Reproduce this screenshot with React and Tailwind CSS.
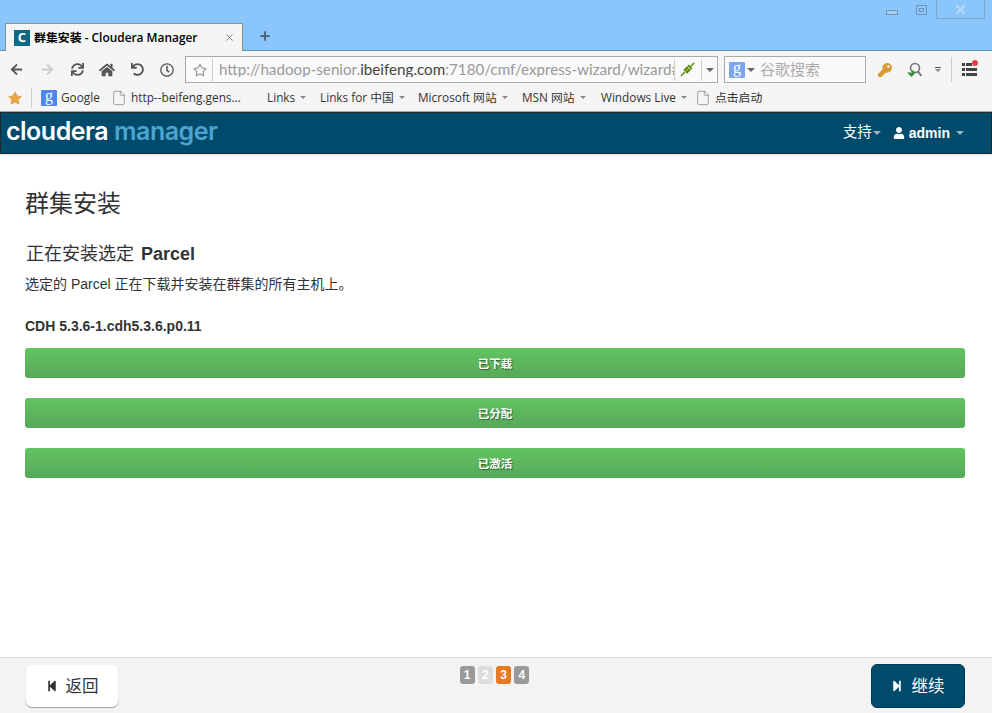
import React from "react";
import { FaArrowLeft, FaArrowRight, FaSync, FaHome, FaUndo, FaRegClock, FaStar, FaRegStar, FaKey, FaUser, FaStepBackward, FaStepForward } from "react-icons/fa";
import { File, Plus, X } from "lucide-react";

const Caret = ({ className = "border-t-[#888]" }) => (
  <span className={`block w-0 h-0 border-x-[4px] border-x-transparent border-t-[4px] ${className}`} />
);

const SmallCaret = () => (
  <span className="block w-0 h-0 border-x-[3px] border-x-transparent border-t-[3px] border-t-[#888]" />
);

// the blue "g" tile used for google bookmark and search box
const GoogleTile = ({ className }) => (
  <span className={`flex items-center justify-center w-4 h-4 rounded-[1px] text-white text-[16px] leading-none pb-[3px] font-['Liberation_Serif',serif] ${className}`}>
    g
  </span>
);

function BookmarkItem({ width, children }) {
  return <div className={`flex items-center gap-[5px] shrink-0 ${width}`}>{children}</div>;
}

const PageIcon = () => (
  <File size={16} strokeWidth={1.2} className="text-[#888] shrink-0 -ml-[2px] -mr-[1px]" />
);

function BrowserChrome() {
  return (
    <div className="font-['Open_Sans','Noto_Sans_CJK_SC',sans-serif]">
      {/* Title bar */}
      <div className="h-[51px] bg-[#8ac5fb] border-b border-[#6b90b5] flex flex-col">
        <div className="h-[23px] flex justify-end items-start pr-[7px] shrink-0">
          <div className="w-[12px] h-[5px] mt-[10px] mr-[18px] bg-[#a9cdec] border border-[#6f94b8]" />
          <div className="w-[11px] h-[10px] mt-[5px] mr-[9px] border border-[#6f94b8] flex items-center justify-center">
            <div className="w-[5px] h-[4px] border border-[#6f94b8]" />
          </div>
          <div className="w-[49px] h-[19px] border border-t-0 border-[#7aa6d0] flex items-center justify-center">
            <X size={15} strokeWidth={3} className="text-[#b9d8f2]" />
          </div>
        </div>
        <div className="flex items-end pl-[5px] h-[27px]">
          <div className="w-[238px] h-[28px] bg-[#f5f5f5] border border-b-0 border-[#8c8f92] flex items-center pl-[8px] pr-[7px] -mb-px">
            <span className="w-4 h-4 bg-[#0b6a85] text-white text-[13px] font-bold leading-none flex items-center justify-center shrink-0">C</span>
            <span className="ml-[4px] text-[11.9px] text-black font-semibold whitespace-nowrap flex-1">群集安装 - Cloudera Manager</span>
            <X size={11} strokeWidth={2} className="text-[#777]" />
          </div>
          <Plus size={14} strokeWidth={3} className="ml-[15px] mb-[7px] text-[#4a5d70]" />
        </div>
      </div>

      {/* Nav toolbar */}
      <div className="h-[33px] pt-[4px] bg-[#f5f5f5] flex items-center pl-[10px]">
        <FaArrowLeft size={13} className="text-[#555] shrink-0" />
        <FaArrowRight size={13} className="ml-[18px] text-[#ccc] shrink-0" />
        <FaSync size={13} className="ml-[17px] text-[#555] shrink-0" />
        <FaHome size={16} className="ml-[15px] text-[#555] shrink-0" />
        <FaUndo size={13} className="ml-[16px] text-[#555] shrink-0" />
        <FaRegClock size={14} className="ml-[16px] text-[#555] shrink-0" />
        <div className="ml-[11px] w-[533px] h-[27px] border border-[#aaa] bg-[#fafafa] flex items-center shrink-0">
          <FaRegStar size={14} className="ml-[7px] text-[#999] shrink-0" />
          <div className="ml-[5px] w-px h-[22px] bg-[#ccc] shrink-0" />
          <div className="ml-[6px] w-[455px] overflow-hidden whitespace-nowrap text-[15.2px] leading-none text-[#999] shrink-0 font-['Lato',sans-serif]">
            http://hadoop-senior.<span className="text-[#444]">ibeifeng.com</span>:7180/cmf/express-wizard/wizard#
          </div>
          <div className="w-px h-[22px] bg-[#ccc] shrink-0" />
          {/* connection plug icon */}
          <svg viewBox="0 0 16 16" className="ml-[5px] w-[15px] h-[15px] shrink-0" fill="none">
            <path d="M1 15 5 11M11 5l4-4" stroke="#5c8a0a" strokeWidth="1.6" />
            <path d="M3.5 8.5 7.5 4.5 11.5 8.5 7.5 12.5z" fill="#5c8a0a" />
            <path d="M8.5 3.5 12.5 7.5" stroke="#5c8a0a" strokeWidth="2" />
            <path d="M6 10 10 6" stroke="#c9dca0" strokeWidth="1" />
          </svg>
          <div className="ml-[6px] w-px h-[22px] bg-[#ccc] shrink-0" />
          <span className="ml-[4px]"><Caret className="border-t-[#666]" /></span>
        </div>
        <div className="ml-[6px] w-[142px] h-[27px] border border-[#aaa] bg-[#fafafa] flex items-center shrink-0">
          <GoogleTile className="ml-[4px] bg-[#7aa7ee]" />
          <span className="ml-[2px]"><Caret className="border-t-[#666]" /></span>
          <span className="ml-[5px] text-[15px] leading-none text-[#aaa] whitespace-nowrap">谷歌搜索</span>
        </div>
        <FaKey size={14} className="ml-[12px] text-[#dc9a35] shrink-0" />
        {/* search-with-arrow icon */}
        <svg viewBox="0 0 16 16" className="ml-[14px] w-[16px] h-[16px] shrink-0" fill="none">
          <circle cx="9" cy="6" r="4.5" stroke="#777" strokeWidth="1.6" />
          <path d="M12 9.5 15.5 14" stroke="#777" strokeWidth="2" />
          <path d="M7 8.5v3.5H3.5" stroke="#3f8f3a" strokeWidth="2" />
          <path d="M1 10.5 5.5 15l4-4.5z" fill="#3f8f3a" />
        </svg>
        <div className="ml-[13px] flex flex-col items-center gap-[1px] shrink-0">
          <span className="w-[6px] h-px bg-[#555]" />
          <SmallCaret />
        </div>
        <div className="ml-[10px] w-px h-[25px] bg-[#ccc] shrink-0" />
        <div className="ml-[10px] w-[15px] relative flex flex-col gap-[2px] shrink-0">
          <span className="h-[3px] w-[10px] flex gap-[1px]"><span className="w-[3px] bg-[#444]" /><span className="flex-1 bg-[#444]" /></span>
          <span className="h-[3px] flex gap-[1px]"><span className="w-[3px] bg-[#444]" /><span className="flex-1 bg-[#444]" /></span>
          <span className="h-[3px] flex gap-[1px]"><span className="w-[3px] bg-[#444]" /><span className="flex-1 bg-[#444]" /></span>
          <span className="absolute -right-[1px] -top-[3px] w-[6px] h-[6px] rounded-full bg-[#e5403e]" />
        </div>
      </div>

      {/* Bookmarks bar */}
      <div className="h-[28px] bg-[#f5f5f5] border-b border-[#a8a8a8] flex items-center pl-[8px] text-[11.8px] text-[#333] whitespace-nowrap">
        <FaStar size={14} className="text-[#e8a84a] shrink-0" />
        <div className="ml-[9px] w-px h-[20px] bg-[#ccc] shrink-0" />
        <div className="ml-[9px] shrink-0 flex items-center gap-[4px] w-[72px]">
          <GoogleTile className="bg-[#4f86ec]" />
          <span>Google</span>
        </div>
        <BookmarkItem width="w-[154px]">
          <PageIcon />
          <span>http--beifeng.gens...</span>
        </BookmarkItem>
        <BookmarkItem width="w-[53px]"><span>Links</span><SmallCaret /></BookmarkItem>
        <BookmarkItem width="w-[98px]"><span>Links for 中国</span><SmallCaret /></BookmarkItem>
        <BookmarkItem width="w-[104px]"><span>Microsoft 网站</span><SmallCaret /></BookmarkItem>
        <BookmarkItem width="w-[79px]"><span>MSN 网站</span><SmallCaret /></BookmarkItem>
        <BookmarkItem width="w-[96px]"><span>Windows Live</span><SmallCaret /></BookmarkItem>
        <BookmarkItem width="w-[90px]">
          <PageIcon />
          <span>点击启动</span>
        </BookmarkItem>
      </div>
    </div>
  );
}

function AppHeader() {
  return (
    <header className="h-[42px] bg-[#004a6b] border border-[#1f2a30] flex items-center justify-between pl-[5px] pr-[27px] shadow-[0_1px_2px_rgba(0,0,0,0.15)]">
      <div className="font-['Inter',sans-serif] text-[25px] font-semibold leading-none tracking-[-0.5px] -mt-[3px] whitespace-nowrap">
        <span className="text-white">cloudera</span>
        <span className="text-[#4ba5cf] ml-[6px]">manager</span>
      </div>
      <div className="flex items-center text-white font-['Liberation_Sans','Noto_Sans_CJK_SC',sans-serif]">
        <span className="text-[14.5px]">支持</span>
        <span className="ml-[1px]"><Caret className="border-t-[#9db4c2]" /></span>
        <FaUser size={12} className="ml-[12px]" />
        <span className="ml-[4px] text-[14px] font-bold mt-[1px]">admin</span>
        <span className="ml-[6px]"><Caret className="border-t-[#9db4c2]" /></span>
      </div>
    </header>
  );
}

function ProgressBar({ label }) {
  return (
    <div className="h-[30px] pt-[4px] rounded-[3px] bg-gradient-to-b from-[#62c462] to-[#57a957] flex items-center justify-center text-[11.5px] font-bold text-white [text-shadow:1px_1px_1px_rgba(0,0,0,0.45)]">
      {label}
    </div>
  );
}

export default function App() {
  return (
    <div className="w-[992px] h-[713px] flex flex-col overflow-hidden bg-white font-['Liberation_Sans','Noto_Sans_CJK_SC',sans-serif]">
      <BrowserChrome />
      <AppHeader />

      {/* Wizard body */}
      <main className="flex-1 pl-[25px] pr-[27px] text-[#333]">
        <h1 className="mt-[33px] text-[24px] leading-[33px] font-normal">群集安装</h1>
        <h2 className="mt-[22px] pl-[1px] text-[18px] leading-[24px] font-bold">
          <span className="font-normal mr-[2px]">正在安装选定</span> Parcel
        </h2>
        <p className="mt-[8px] text-[14px] leading-[20px]">选定的 Parcel 正在下载并安装在群集的所有主机上。</p>
        <div className="mt-[22px] text-[14px] leading-[20px] font-bold">CDH 5.3.6-1.cdh5.3.6.p0.11</div>
        <div className="mt-[12px] flex flex-col gap-[20px]">
          <ProgressBar label="已下载" />
          <ProgressBar label="已分配" />
          <ProgressBar label="已激活" />
        </div>
      </main>

      {/* Wizard footer */}
      <footer className="h-[56px] shrink-0 bg-[#f3f3f3] border-t border-[#dcdcdc] flex items-start justify-between pl-[26px] pr-[27px]">
        <button className="mt-[7px] w-[92px] h-[42px] bg-white rounded-[6px] shadow-[0_1px_1px_rgba(0,0,0,0.35)] flex items-center justify-center gap-[8px] text-[16.5px] text-[#333]">
          <FaStepBackward size={12} className="text-[#333]" />
          返回
        </button>
        <div className="mt-[8px] flex gap-[3.3px] text-[12px] font-bold text-white">
          <span className="w-[15px] h-[18px] rounded-[3px] bg-[#999] flex items-center justify-center">1</span>
          <span className="w-[15px] h-[18px] rounded-[3px] bg-[#ddd] flex items-center justify-center">2</span>
          <span className="w-[15px] h-[18px] rounded-[3px] bg-[#e87722] flex items-center justify-center">3</span>
          <span className="w-[15px] h-[18px] rounded-[3px] bg-[#999] flex items-center justify-center">4</span>
        </div>
        <button className="mt-[6px] w-[94px] h-[44px] bg-[#004a6b] border border-[#003a55] rounded-[6px] flex items-center justify-center gap-[8px] text-[16.5px] text-white">
          <FaStepForward size={12} />
          继续
        </button>
      </footer>
    </div>
  );
}
